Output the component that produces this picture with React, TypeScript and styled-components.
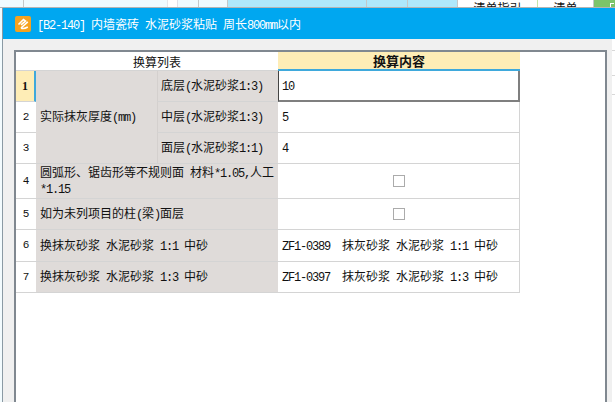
import React from "react";
import styled, { createGlobalStyle } from "styled-components";

const GlobalStyle = createGlobalStyle`
  html, body {
    margin: 0;
    padding: 0;
    overflow: hidden;
  }
  body {
    width: 615px;
    height: 402px;
    background: #fff;
    font-family: "Noto Sans CJK SC", "Liberation Sans", sans-serif;
  }
`;

const Screen = styled.div`
  width: 615px;
  height: 402px;
  display: flex;
  flex-direction: column;
  overflow: hidden;
  background: #f2fbfe;
`;

const BackStrip = styled.div`
  height: 7px;
  flex: none;
  display: flex;
  border-bottom: 1px solid #b4b4b4;
  overflow: hidden;
`;

const BackCell = styled.div<{ $w: number; $bg?: string; $line?: string }>`
  width: ${(p) => p.$w}px;
  flex: none;
  height: 7px;
  overflow: hidden;
  background: ${(p) => p.$bg || "#effbff"};
  border-right: 1px solid ${(p) => p.$line || "#c4c8c8"};
  box-sizing: border-box;
  font-size: 12px;
  line-height: 16px;
  color: #111;
  text-align: center;
`;

const GreenMark = styled.div`
  width: 5px;
  height: 3px;
  margin: 3px 0 0 16px;
  border-top: 1px solid #fff;
  border-left: 1px solid #fff;
`;

const Dialog = styled.div`
  flex: 1;
  margin-left: 2px;
  border-left: 1px solid #8a9aa4;
  display: flex;
  flex-direction: column;
  min-height: 0;
`;

const TitleBar = styled.div`
  height: 31px;
  flex: none;
  background: #00a7f0;
  display: flex;
  align-items: center;
  padding-left: 12px;
  gap: 6px;
  color: #fff;
`;

const TitleText = styled.span`
  font-size: 12px;
  white-space: pre;
`;

const Content = styled.div`
  flex: 1;
  display: flex;
  min-height: 0;
`;

const Body = styled.div`
  flex: 1;
  background: #f0f0f0;
  padding: 11px 5px 0 11px;
  min-height: 0;
  display: flex;
`;

const Gutter = styled.div`
  width: 3px;
  flex: none;
  background: #fff;
  padding-top: 11px;
`;

const GutterLine = styled.div<{ $gap: number }>`
  height: ${(p) => p.$gap}px;
  box-sizing: border-box;
  border-top: 1px solid #d8d8d8;
`;

const GridFrame = styled.div`
  flex: 1;
  background: #fff;
  border: 2px solid #808890;
  border-bottom: none;
  overflow: hidden;
`;

const Grid = styled.div`
  display: grid;
  width: 504px;
  grid-template-columns: 20px 121px 121px 242px;
  grid-template-rows: 19px 31px 31px 31px 35px 31px 32px 31px;
`;

const Cell = styled.div<{ $col?: string; $row?: string }>`
  grid-column: ${(p) => p.$col || "auto"};
  grid-row: ${(p) => p.$row || "auto"};
  box-sizing: border-box;
  display: flex;
  align-items: center;
  font-size: 12px;
  line-height: 13px;
  color: #111;
  min-width: 0;
  border-bottom: 1px solid #d4d4d4;
`;

const Corner = styled(Cell)`
  background: #fff;
`;

const ListHead = styled(Cell)`
  justify-content: center;
  background: #fff;
`;

const ContentHead = styled(Cell)`
  justify-content: center;
  font-size: 13px;
  font-weight: 700;
  background: #feedb6;
  border-bottom: 2px solid #3fa9dc;
`;

const RowNo = styled(Cell)<{ $active?: boolean }>`
  justify-content: center;
  background: ${(p) => (p.$active ? "#feedb6" : "#fff")};
  font-family: ${(p) => (p.$active ? '"Liberation Serif", serif' : '"Liberation Mono", monospace')};
  font-weight: ${(p) => (p.$active ? 700 : 400)};
  font-size: ${(p) => (p.$active ? 12 : 11)}px;
  ${(p) => p.$active && "border-right: 2px solid #3fa9dc;"}
`;

const Label = styled(Cell)`
  background: #dfdbd9;
  padding-left: 4px;
`;

const Part = styled(Label)`
  border-left: 1px solid #d4d0ce;
  padding-left: 3px;
`;

const Value = styled(Cell)`
  background: #fff;
  padding-left: 4px;
  border-right: 1px solid #d4d4d4;
`;

const ActiveValue = styled(Value)`
  padding-left: 3px;
  border-left: 1px solid #444;
  border-right: 2px solid #7f7f7f;
  border-bottom: 2px solid #7f7f7f;
`;

const CheckCell = styled(Value)`
  justify-content: center;
  padding-left: 0;
`;

const Check = styled.span`
  width: 12px;
  height: 12px;
  box-sizing: border-box;
  border: 1px solid #ababab;
  background: #fff;
`;

const Mono = styled.span`
  font-family: "Liberation Mono", monospace;
  font-size: 12px;
  letter-spacing: -1.2px;
  white-space: pre-wrap;
`;

// ascii gets a fixed 6px advance, cjk stays at 12px, like the original bitmap font
const T = ({ s }: { s: string }) => (
  <span>
    {s.split(/([\x00-\x7f]+)/).map((part, i) =>
      /^[\x00-\x7f]+$/.test(part) ? <Mono key={i}>{part}</Mono> : part
    )}
  </span>
);

const Logo = () => (
  <svg width="16" height="16" viewBox="0 0 16 16">
    <rect width="16" height="16" rx="2" fill="#f5a21e" />
    <path
      d="M3.5 8.5 L8.5 3.5 L10.5 5 L6 8.8 M6 12 L12.8 5.8 M6 12 C8 13 10 12.5 12.8 11"
      fill="none"
      stroke="#fff"
      strokeWidth="1.6"
    />
  </svg>
);

const App = () => {
  return (
    <Screen>
      <GlobalStyle />
      <BackStrip>
        <BackCell $w={24} />
        <BackCell $w={144} $line="#e4e6ea" />
        <BackCell $w={10} $bg="#fff" $line="#e0e0e8" />
        <BackCell $w={21} />
        <BackCell $w={29} />
        <BackCell $w={139} $bg="#aee8fb" />
        <BackCell $w={41} $bg="#aee8fb" />
        <BackCell $w={50} $bg="#aee8fb" />
        <BackCell $w={80} $bg="#fff" $line="#c4e6a8">清单指引</BackCell>
        <BackCell $w={56} $bg="#fff">清单</BackCell>
        <BackCell $w={21} $bg="#7cc46a" $line="#7cc46a"><GreenMark /></BackCell>
      </BackStrip>
      <Dialog>
        <TitleBar>
          <Logo />
          <TitleText><T s="[B2-140] 内墙瓷砖 水泥砂浆粘贴 周长800mm以内" /></TitleText>
        </TitleBar>
        <Content>
          <Body>
            <GridFrame>
              <Grid>
                <Corner />
                <ListHead $col="2 / 4">换算列表</ListHead>
                <ContentHead>换算内容</ContentHead>

                <RowNo $active>1</RowNo>
                <Label $col="2" $row="2 / 5"><T s="实际抹灰厚度(mm)" /></Label>
                <Part><T s="底层(水泥砂浆1:3)" /></Part>
                <ActiveValue><T s="10" /></ActiveValue>

                <RowNo $col="1" $row="3">2</RowNo>
                <Part $col="3" $row="3"><T s="中层(水泥砂浆1:3)" /></Part>
                <Value><T s="5" /></Value>

                <RowNo $col="1" $row="4">3</RowNo>
                <Part $col="3" $row="4"><T s="面层(水泥砂浆1:1)" /></Part>
                <Value><T s="4" /></Value>

                <RowNo>4</RowNo>
                <Label $col="2 / 4"><T s="圆弧形、锯齿形等不规则面 材料*1.05,人工*1.15" /></Label>
                <CheckCell><Check /></CheckCell>

                <RowNo>5</RowNo>
                <Label $col="2 / 4"><T s="如为未列项目的柱(梁)面层" /></Label>
                <CheckCell><Check /></CheckCell>

                <RowNo>6</RowNo>
                <Label $col="2 / 4"><T s="换抹灰砂浆 水泥砂浆 1:1 中砂" /></Label>
                <Value><T s="ZF1-0389  抹灰砂浆 水泥砂浆 1:1 中砂" /></Value>

                <RowNo>7</RowNo>
                <Label $col="2 / 4"><T s="换抹灰砂浆 水泥砂浆 1:3 中砂" /></Label>
                <Value><T s="ZF1-0397  抹灰砂浆 水泥砂浆 1:3 中砂" /></Value>
              </Grid>
            </GridFrame>
          </Body>
          <Gutter>
            <GutterLine $gap={25} />
            <GutterLine $gap={19} />
            <GutterLine $gap={19} />
          </Gutter>
        </Content>
      </Dialog>
    </Screen>
  );
};

export default App;
